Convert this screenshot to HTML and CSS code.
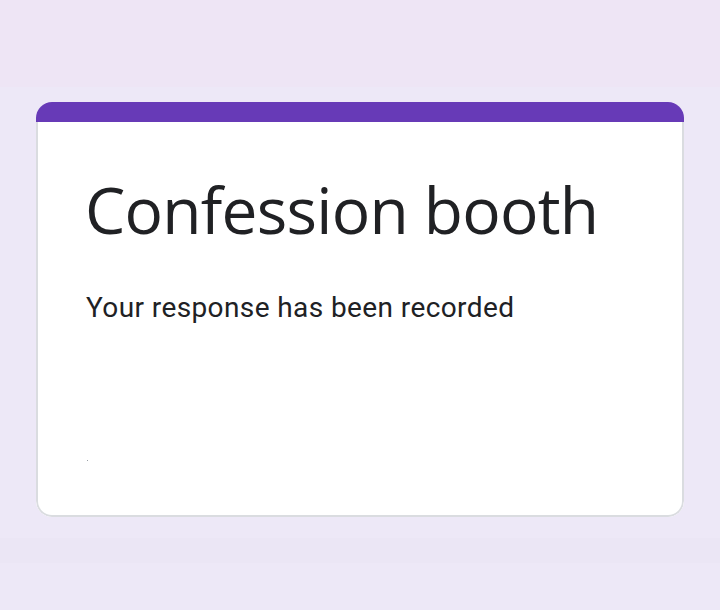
FILE: index.html
```html
<!DOCTYPE html>
<html lang="en">
<head>
<meta charset="utf-8">
<title>Confession booth</title>
<link rel="stylesheet" href="styles.css">
</head>
<body>
<div class="page">
  <div class="top-band"></div>
  <main class="card">
    <div class="card-accent"></div>
    <div class="card-body">
      <h1 class="title">Confession booth</h1>
      <p class="message">Your response has been recorded</p>
      <div class="links"><span class="speck"></span></div>
    </div>
  </main>
  <div class="bottom-band"></div>
</div>
</body>
</html>
```
FILE: styles.css
```css
html, body {
  margin: 0;
  padding: 0;
  background: #ede8f7;
}
.page {
  width: 720px;
  height: 610px;
  display: flex;
  flex-direction: column;
  overflow: hidden;
}
.top-band {
  height: 87px;
  background: #eee5f5;
  flex: none;
}
.card {
  margin: 15px 36px 0 36px;
  border-radius: 16px;
  overflow: hidden;
  background: #ffffff;
  flex: none;
}
.card-accent {
  height: 20px;
  background: #673ab7;
}
.card-body {
  border: 2px solid #dadce0;
  border-top: none;
  border-radius: 0 0 16px 16px;
  padding: 48px 48px 0 48px;
  height: 395px;
  box-sizing: border-box;
}
.title {
  margin: 0 0 0 -1px;
  font-family: "Open Sans", "Liberation Sans", sans-serif;
  font-weight: 400;
  font-size: 64px;
  line-height: 80px;
  color: #202124;
  letter-spacing: -0.75px;
}
.message {
  margin: 40px 0 0 0;
  font-family: Roboto, "Liberation Sans", sans-serif;
  font-size: 28px;
  line-height: 36px;
  color: #202124;
  letter-spacing: 0.4px;
}
.links {
  margin-top: 134px;
  height: 4px;
}
.speck {
  display: block;
  width: 1px;
  height: 1px;
  margin-left: 1px;
  background: #9aa0a6;
}
.bottom-band {
  margin-top: 21px;
  height: 25px;
  background: #ebe6f5;
  flex: none;
}
```
